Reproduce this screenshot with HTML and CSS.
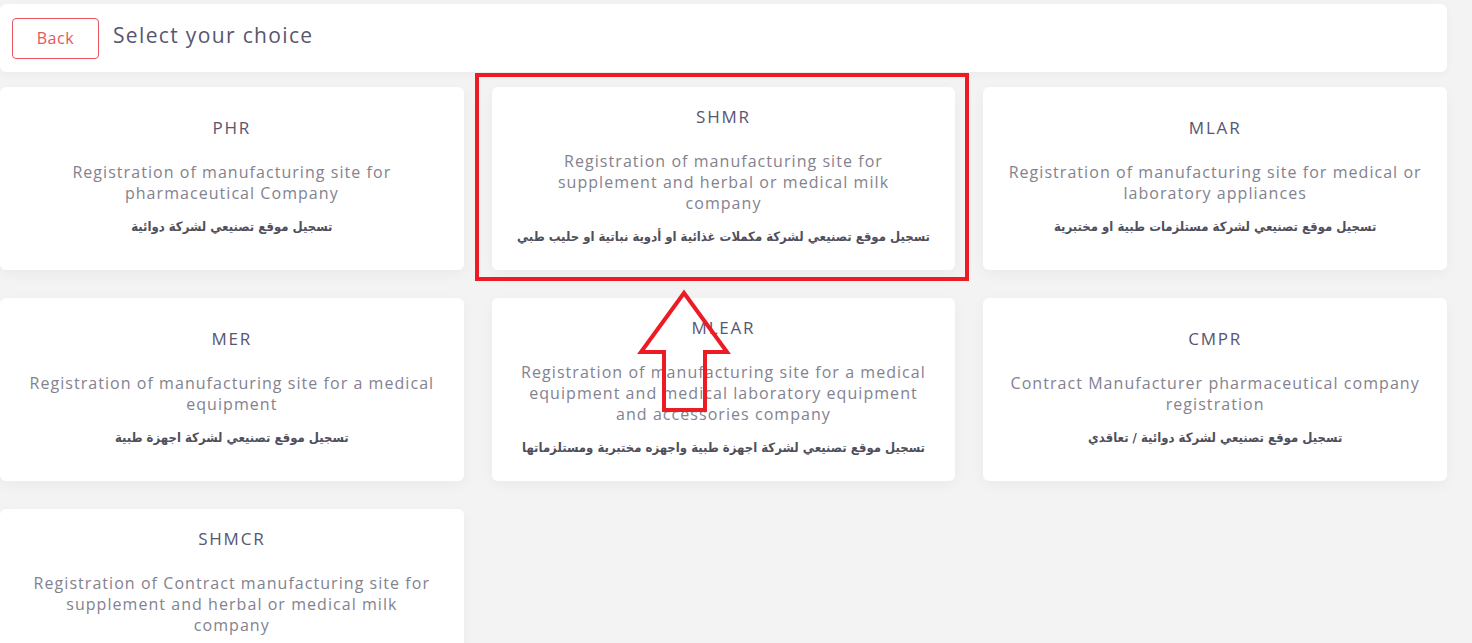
FILE: index.html
```html
<!DOCTYPE html>
<html lang="en">
<head>
<meta charset="utf-8">
<title>Select your choice</title>
<link rel="stylesheet" href="styles.css">
</head>
<body>
<div class="page">
  <header class="header">
    <button class="back-btn" type="button">Back</button>
    <h1 class="header-title">Select your choice</h1>
  </header>

  <main class="grid">
    <div class="card">
      <div class="card-title">PHR</div>
      <div class="card-desc">Registration of manufacturing site for pharmaceutical Company</div>
      <div class="card-ar" dir="rtl">تسجيل موقع تصنيعي لشركة دوائية</div>
    </div>
    <div class="card">
      <div class="card-title">SHMR</div>
      <div class="card-desc">Registration of manufacturing site for supplement and herbal or medical milk<br>company</div>
      <div class="card-ar" dir="rtl">تسجيل موقع تصنيعي لشركة مكملات غذائية او أدوية نباتية او حليب طبي</div>
    </div>
    <div class="card">
      <div class="card-title">MLAR</div>
      <div class="card-desc">Registration of manufacturing site for medical or laboratory appliances</div>
      <div class="card-ar" dir="rtl">تسجيل موقع تصنيعي لشركة مستلزمات طبية او مختبرية</div>
    </div>
    <div class="card">
      <div class="card-title">MER</div>
      <div class="card-desc">Registration of manufacturing site for a medical equipment</div>
      <div class="card-ar" dir="rtl">تسجيل موقع تصنيعي لشركة اجهزة طبية</div>
    </div>
    <div class="card">
      <div class="card-title">MLEAR</div>
      <div class="card-desc">Registration of manufacturing site for a medical equipment and medical laboratory equipment and accessories company</div>
      <div class="card-ar" dir="rtl">تسجيل موقع تصنيعي لشركة اجهزة طبية واجهزه مختبرية ومستلزماتها</div>
    </div>
    <div class="card">
      <div class="card-title">CMPR</div>
      <div class="card-desc">Contract Manufacturer pharmaceutical company registration</div>
      <div class="card-ar" dir="rtl">تسجيل موقع تصنيعي لشركة دوائية / تعاقدي</div>
    </div>
    <div class="card">
      <div class="card-title">SHMCR</div>
      <div class="card-desc">Registration of Contract manufacturing site for supplement and herbal or medical milk<br>company</div>
      <div class="card-ar" dir="rtl">تسجيل موقع تصنيعي تعاقدي لشركة مكملات غذائية او أدوية نباتية او حليب طبي</div>
    </div>
  </main>

  <svg class="annotation" width="1472" height="643" viewBox="0 0 1472 643" aria-hidden="true">
    <rect x="477" y="75" width="490" height="204" fill="none" stroke="#ed1c24" stroke-width="4"/>
    <polygon points="684,293 641,352 664,352 664,410 705,410 705,352 727,352" fill="none" stroke="#ed1c24" stroke-width="4" stroke-linejoin="miter"/>
  </svg>
</div>
</body>
</html>
```
FILE: styles.css
```css
html, body {
  margin: 0;
  padding: 0;
}

body {
  background: #f3f3f4;
  font-family: "Open Sans", "DejaVu Sans", sans-serif;
  height: 643px;
  overflow: hidden;
}

.page {
  position: relative;
  padding: 4px 25px 0 0;
}

.header {
  display: flex;
  align-items: center;
  gap: 14px;
  height: 68px;
  padding: 0 12px;
  box-sizing: border-box;
  background: #ffffff;
  border-radius: 6px;
  box-shadow: 0 2px 8px rgba(0, 0, 0, 0.04);
  margin-bottom: 15px;
}

.back-btn {
  width: 87px;
  height: 41px;
  border: 1px solid #e8555a;
  border-radius: 4px;
  background: #ffffff;
  color: #e8555a;
  font-family: "Open Sans", sans-serif;
  font-size: 16px;
  letter-spacing: 0.6px;
  cursor: pointer;
}

.header-title {
  margin: 0 0 6px;
  font-size: 21px;
  font-weight: 400;
  letter-spacing: 1.35px;
  color: #575670;
}

.grid {
  display: grid;
  grid-template-columns: repeat(3, 1fr);
  gap: 28px;
}

.card {
  min-height: 183px;
  box-sizing: border-box;
  padding: 19px 20px 23px;
  background: #ffffff;
  border-radius: 6px;
  box-shadow: 0 4px 14px rgba(0, 0, 0, 0.04);
  display: flex;
  flex-direction: column;
  align-items: center;
  justify-content: center;
  text-align: center;
}

.card-title {
  font-size: 17px;
  line-height: 22px;
  letter-spacing: 1.8px;
  color: #575670;
  margin-bottom: 23px;
}

.card-desc {
  font-size: 16px;
  line-height: 21px;
  letter-spacing: 1.05px;
  color: #83828f;
}

.card-ar {
  margin-top: 13px;
  font-family: "DejaVu Sans Condensed", "DejaVu Sans", sans-serif;
  font-stretch: condensed;
  font-size: 13px;
  line-height: 20px;
  font-weight: 700;
  color: #50505c;
}

.annotation {
  position: absolute;
  top: 0;
  left: 0;
  pointer-events: none;
}
```
